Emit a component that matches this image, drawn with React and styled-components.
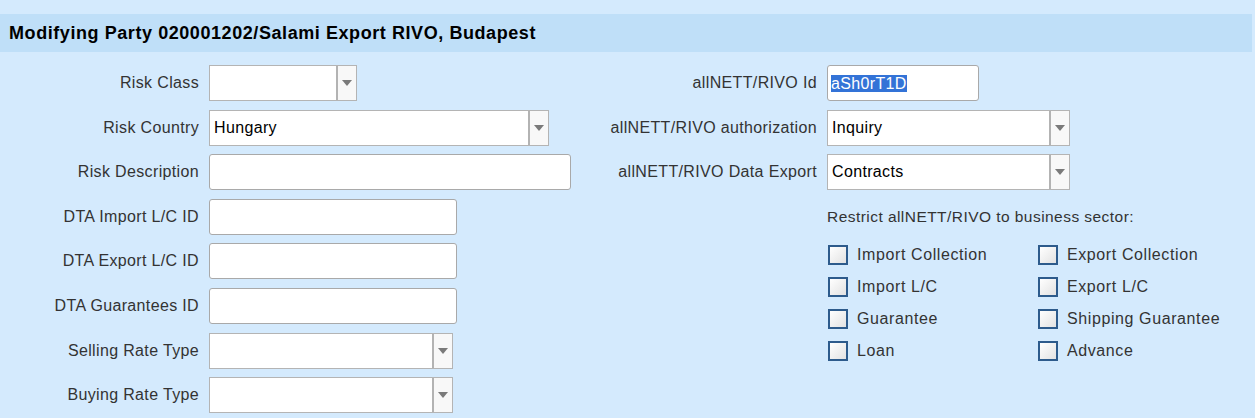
import React from 'react';
import styled, {createGlobalStyle} from 'styled-components'

const Global = createGlobalStyle`
  html, body {
    margin: 0;
    padding: 0;
    background: #d4eafd;
    font-family: "Liberation Sans", Arial, sans-serif;
  }
`

const Page = styled.div`
  width: 1255px;
  height: 418px;
  padding-top: 14px;
  box-sizing: border-box;
  background: #d4eafd;
  overflow: hidden;
`

const Header = styled.div`
  width: 1252px;
  height: 38px;
  box-sizing: border-box;
  padding-left: 9px;
  background: #bfdff8;
  display: flex;
  align-items: center;
  font-size: 18px;
  letter-spacing: 0.57px;
  font-weight: bold;
  color: #000;
`

const Form = styled.div`
  display: flex;
  margin-top: 13px;
`

const Column = styled.div`
  display: grid;
  grid-template-columns: ${p => p.$label}px auto;
  grid-auto-rows: 36px;
  column-gap: 10px;
  row-gap: 8.6px;
  width: ${p => p.$width}px;
  align-content: start;
`

const Label = styled.div`
  display: flex;
  align-items: center;
  justify-content: flex-end;
  font-size: 16px;
  letter-spacing: 0.35px;
  color: #333;
  white-space: nowrap;
`

const Field = styled.div`
  display: flex;
  align-items: center;
`

const TextBox = styled.div`
  width: ${p => p.$w}px;
  height: 36px;
  box-sizing: border-box;
  background: #fff;
  border: 1px solid #a9a9a9;
  border-radius: 3px;
  display: flex;
  align-items: center;
  padding-left: 3px;
  font-size: 16px;
  letter-spacing: 0.35px;
  color: #000;
`

const Selected = styled.span`
  background: #3373d7;
  color: #fff;
  line-height: 17px;
`

const Select = styled.div`
  width: ${p => p.$w}px;
  height: 36px;
  box-sizing: border-box;
  background: #fff;
  border: 1px solid #b4b4b4;
  display: flex;
  font-size: 16px;
  letter-spacing: 0.35px;
  color: #000;
`

const SelectValue = styled.div`
  flex: 1;
  display: flex;
  align-items: center;
  padding-left: 4px;
`

const SelectButton = styled.div`
  width: 18px;
  border-left: 2px solid #b3b3b3;
  background: #f8f8f8;
  display: flex;
  align-items: center;
  justify-content: center;
  &::after {
    content: "";
    border-left: 5px solid transparent;
    border-right: 5px solid transparent;
    border-top: 6px solid #7a7a7a;
  }
`

const Sector = styled.div`
  grid-column: 2;
  display: flex;
  flex-direction: column;
`

const SectorTitle = styled.div`
  flex-shrink: 0;
  height: 36px;
  display: flex;
  align-items: center;
  font-size: 15.5px;
  letter-spacing: 0.45px;
  color: #333;
`

const Checks = styled.div`
  flex-shrink: 0;
  display: grid;
  grid-template-columns: 210px auto;
  grid-auto-rows: 20px;
  row-gap: 12px;
  margin-top: 10px;
`

const Check = styled.label`
  display: flex;
  align-items: center;
  gap: 9px;
  font-size: 16px;
  letter-spacing: 0.6px;
  color: #333;
  white-space: nowrap;
`

const Box = styled.span`
  width: 20px;
  height: 20px;
  margin-left: 1px;
  box-sizing: border-box;
  border: 2px solid #2d5b8c;
  background: linear-gradient(135deg, #ffffff 0%, #e2e2e2 100%);
`

const SelectField = ({w, value}) => (
    <Select $w={w}>
        <SelectValue>{value}</SelectValue>
        <SelectButton/>
    </Select>
)

const sectors = [
    'Import Collection', 'Export Collection',
    'Import L/C', 'Export L/C',
    'Guarantee', 'Shipping Guarantee',
    'Loan', 'Advance'
]

const App = () => {
    return (
        <Page>
            <Global/>
            <Header>Modifying Party 020001202/Salami Export RIVO, Budapest</Header>
            <Form>
                <Column $label={199} $width={600}>
                    <Label>Risk Class</Label>
                    <Field><SelectField w={148}/></Field>
                    <Label>Risk Country</Label>
                    <Field><SelectField w={340} value="Hungary"/></Field>
                    <Label>Risk Description</Label>
                    <Field><TextBox $w={362}/></Field>
                    <Label>DTA Import L/C ID</Label>
                    <Field><TextBox $w={248}/></Field>
                    <Label>DTA Export L/C ID</Label>
                    <Field><TextBox $w={248}/></Field>
                    <Label>DTA Guarantees ID</Label>
                    <Field><TextBox $w={248}/></Field>
                    <Label>Selling Rate Type</Label>
                    <Field><SelectField w={244}/></Field>
                    <Label>Buying Rate Type</Label>
                    <Field><SelectField w={244}/></Field>
                </Column>
                <Column $label={217} $width={655}>
                    <Label>allNETT/RIVO Id</Label>
                    <Field><TextBox $w={152}><Selected>aSh0rT1D</Selected></TextBox></Field>
                    <Label>allNETT/RIVO authorization</Label>
                    <Field><SelectField w={243} value="Inquiry"/></Field>
                    <Label>allNETT/RIVO Data Export</Label>
                    <Field><SelectField w={243} value="Contracts"/></Field>
                    <Sector>
                        <SectorTitle>Restrict allNETT/RIVO to business sector:</SectorTitle>
                        <Checks>
                            {sectors.map(s => (
                                <Check key={s}><Box/>{s}</Check>
                            ))}
                        </Checks>
                    </Sector>
                </Column>
            </Form>
        </Page>
    )
}

export default App
